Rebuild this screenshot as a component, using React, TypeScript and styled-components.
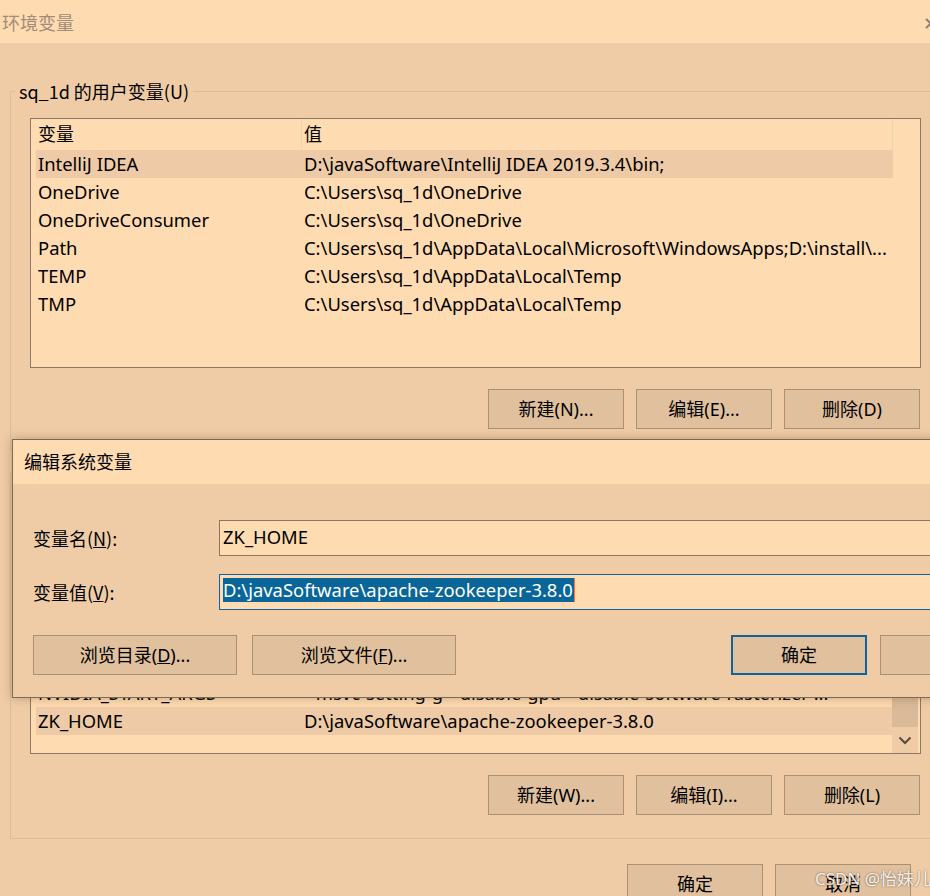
import React from 'react';
import styled, { createGlobalStyle } from 'styled-components';

// 护眼色主题下的 Windows 环境变量窗口
const C = {
  light: '#FFDBB2',
  body: '#EFCCA6',
  btn: '#E1C09E',
  btnBorder: '#AA9176',
  listBorder: '#8C7864',
  groupLine: '#DCBB98',
  selRow: '#EECBA6',
  blue: '#0B65A0',
};

const GlobalStyle = createGlobalStyle`
  body {
    margin: 0;
    background: ${C.body};
    font-family: "Noto Sans", "Noto Sans CJK SC", sans-serif;
    font-size: 18.4px;
    color: #000;
  }
`;

const Window = styled.div`
  position: relative;
  width: 930px;
  height: 896px;
  overflow: hidden;
  background: ${C.body};
`;

const TitleBar = styled.div`
  height: 43px;
  display: flex;
  align-items: center;
  justify-content: space-between;
  padding-left: 2px;
  background: ${C.light};
  color: #A08C79;
  font-family: "Noto Sans CJK SC", sans-serif;
  font-size: 18px;
  line-height: 1;
`;

const CloseGlyph = styled.span`
  margin-right: -8px;
  font-size: 18px;
  font-weight: 300;
  color: #8b7866;
`;

const Body = styled.div`
  padding: 36px 0 0 10px;
`;

const Group = styled.fieldset<{ $gap?: number; $pb?: number }>`
  box-sizing: border-box;
  width: 921px;
  margin: ${(p) => p.$gap ?? 0}px 0 0 0;
  padding: 15px 9px ${(p) => p.$pb ?? 20}px 19px;
  border: 1px solid ${C.groupLine};
  min-width: 0;
`;

const Legend = styled.legend`
  margin-left: -15px;
  padding: 0 4px;
  line-height: 24px;
  font-family: "Noto Sans CJK SC", sans-serif;
  font-size: 18px;
`;

const ListBox = styled.div<{ $h: number }>`
  box-sizing: border-box;
  height: ${(p) => p.$h}px;
  border: 1px solid ${C.listBorder};
  background: ${C.light};
  display: flex;
  position: relative;
  overflow: hidden;
`;

const ListInner = styled.div<{ $bottom?: boolean }>`
  flex: 1;
  display: flex;
  flex-direction: column;
  justify-content: ${(p) => (p.$bottom ? 'flex-end' : 'flex-start')};
  padding: ${(p) => (p.$bottom ? '0 0 18px 5px' : '0 0 0 5px')};
  overflow: hidden;
`;

const Row = styled.div<{ $sel?: boolean }>`
  flex-shrink: 0;
  display: grid;
  grid-template-columns: 266px 1fr;
  width: 857px;
  height: 28px;
  align-items: center;
  padding-left: 2px;
  box-sizing: border-box;
  background: ${(p) => (p.$sel ? C.selRow : 'transparent')};
  white-space: nowrap;
  line-height: 28px;
`;

const HeaderRow = styled(Row)`
  height: 31px;
  line-height: 31px;
  padding-left: 0;
`;

const HeadCell = styled.div`
  height: 100%;
  padding-left: 2px;
  border-right: 1px solid #F0D2B0;
  font-size: 18px;
`;

const Cell = styled.div`
  overflow: hidden;
`;

const ScrollBar = styled.div`
  width: 26px;
  margin-right: 2px;
  display: flex;
  flex-direction: column;
  background: ${C.body};
`;

const Thumb = styled.div`
  flex: 1;
  background: #DABA98;
`;

const ArrowBox = styled.div`
  height: 26px;
  display: flex;
  align-items: center;
  justify-content: center;
`;

const ButtonRow = styled.div<{ $mt: number; $pr?: number }>`
  display: flex;
  justify-content: flex-end;
  gap: 12px;
  margin-top: ${(p) => p.$mt}px;
  padding-right: ${(p) => p.$pr ?? 1}px;
`;

const Button = styled.button<{ $w?: number; $default?: boolean }>`
  box-sizing: border-box;
  width: ${(p) => p.$w ?? 136}px;
  height: 40px;
  padding: 0;
  background: ${C.btn};
  border: ${(p) => (p.$default ? `2px solid ${C.blue}` : `1px solid ${C.btnBorder}`)};
  font-family: "Noto Sans", "Noto Sans CJK SC", sans-serif;
  font-size: 18px;
  color: #000;
  line-height: 1;
`;

const Dialog = styled.div`
  position: absolute;
  left: 12px;
  top: 439px;
  width: 1022px;
  border: 1px solid #7C6A58;
  background: ${C.body};
  box-shadow: 0 0 10px rgba(90, 60, 30, 0.35);
`;

const DialogTitle = styled.div`
  height: 44px;
  display: flex;
  align-items: center;
  padding: 0 0 2px 11px;
  box-sizing: border-box;
  background: ${C.light};
  font-family: "Noto Sans CJK SC", sans-serif;
  font-size: 18px;
`;

const DialogBody = styled.div`
  padding: 36px 19px 22px 20px;
  display: flex;
  flex-direction: column;
`;

const FieldRow = styled.div<{ $mt?: number }>`
  display: grid;
  grid-template-columns: 186px 1fr;
  align-items: center;
  margin-top: ${(p) => p.$mt ?? 0}px;
`;

const Label = styled.label`
  font-family: "Noto Sans CJK SC", sans-serif;
  font-size: 18px;
`;

const Input = styled.div<{ $focus?: boolean }>`
  box-sizing: border-box;
  height: 36px;
  display: flex;
  align-items: center;
  padding: 0 0 4px 3px;
  background: ${C.light};
  border: 1px solid ${(p) => (p.$focus ? C.blue : '#8A7662')};
  white-space: nowrap;
`;

const Selected = styled.span`
  background: #0A6699;
  color: #fff;
  line-height: 24px;
  padding-right: 1px;
  border-right: 1px solid #FF7A1A;
`;

const DialogButtons = styled.div`
  display: flex;
  justify-content: space-between;
  margin-top: 25px;
`;

const BtnGroup = styled.div<{ $gap: number }>`
  display: flex;
  gap: ${(p) => p.$gap}px;
`;

const Watermark = styled.div`
  position: absolute;
  left: 815px;
  top: 865px;
  color: rgba(255, 255, 255, 0.9);
  text-shadow: 0 0 2px rgba(70, 55, 40, 0.8);
  font-size: 17px;
  font-family: "Noto Sans", "Noto Sans CJK SC", sans-serif;
  white-space: nowrap;
`;

const userVars = [
  ['IntelliJ IDEA', 'D:\\javaSoftware\\IntelliJ IDEA 2019.3.4\\bin;'],
  ['OneDrive', 'C:\\Users\\sq_1d\\OneDrive'],
  ['OneDriveConsumer', 'C:\\Users\\sq_1d\\OneDrive'],
  ['Path', 'C:\\Users\\sq_1d\\AppData\\Local\\Microsoft\\WindowsApps;D:\\install\\...'],
  ['TEMP', 'C:\\Users\\sq_1d\\AppData\\Local\\Temp'],
  ['TMP', 'C:\\Users\\sq_1d\\AppData\\Local\\Temp'],
];

const sysVars = [
  ['windir', '%SystemRoot%'],
  ['USERNAME', 'SYSTEM'],
  ['TMP', 'C:\\Windows\\TEMP'],
  ['NVIDIA_START_ARGS', '--msvc-setting-g --disable-gpu --disable-software-rasterizer ...'],
  ['ZK_HOME', 'D:\\javaSoftware\\apache-zookeeper-3.8.0'],
];

export default function App() {
  return (
    <Window>
      <GlobalStyle />
      <TitleBar>
        <span>环境变量</span>
        <CloseGlyph>✕</CloseGlyph>
      </TitleBar>
      <Body>
        <Group>
          <Legend>sq_1d 的用户变量(U)</Legend>
          <ListBox $h={250}>
            <ListInner>
              <HeaderRow>
                <HeadCell>变量</HeadCell>
                <HeadCell>值</HeadCell>
              </HeaderRow>
              {userVars.map(([k, v], i) => (
                <Row key={k + i} $sel={i === 0}>
                  <Cell>{k}</Cell>
                  <Cell>{v}</Cell>
                </Row>
              ))}
            </ListInner>
          </ListBox>
          <ButtonRow $mt={21}>
            <Button>新建(N)...</Button>
            <Button>编辑(E)...</Button>
            <Button>删除(D)</Button>
          </ButtonRow>
        </Group>
        <Group $gap={10} $pb={23}>
          <Legend>系统变量(S)</Legend>
          <ListBox $h={255}>
            <ListInner $bottom>
              {sysVars.map(([k, v], i) => (
                <Row key={k + i} $sel={k === 'ZK_HOME'}>
                  <Cell>{k}</Cell>
                  <Cell>{v}</Cell>
                </Row>
              ))}
            </ListInner>
            <ScrollBar>
              <Thumb />
              <ArrowBox>
                <svg width="14" height="9" viewBox="0 0 14 9">
                  <path d="M1.5 1.5 L7 7 L12.5 1.5" fill="none" stroke="#5A4A3C" strokeWidth="2" />
                </svg>
              </ArrowBox>
            </ScrollBar>
          </ListBox>
          <ButtonRow $mt={21}>
            <Button>新建(W)...</Button>
            <Button>编辑(I)...</Button>
            <Button>删除(L)</Button>
          </ButtonRow>
        </Group>
        <ButtonRow $mt={25} $pr={19}>
          <Button>确定</Button>
          <Button>取消</Button>
        </ButtonRow>
      </Body>

      <Dialog>
        <DialogTitle>编辑系统变量</DialogTitle>
        <DialogBody>
          <FieldRow>
            <Label>
              变量名(<u>N</u>):
            </Label>
            <Input>ZK_HOME</Input>
          </FieldRow>
          <FieldRow $mt={18}>
            <Label>
              变量值(<u>V</u>):
            </Label>
            <Input $focus>
              <Selected>D:\javaSoftware\apache-zookeeper-3.8.0</Selected>
            </Input>
          </FieldRow>
          <DialogButtons>
            <BtnGroup $gap={15}>
              <Button $w={204}>
                浏览目录(<u>D</u>)...
              </Button>
              <Button $w={204}>
                浏览文件(<u>F</u>)...
              </Button>
            </BtnGroup>
            <BtnGroup $gap={13}>
              <Button $default>确定</Button>
              <Button>取消</Button>
            </BtnGroup>
          </DialogButtons>
        </DialogBody>
      </Dialog>

      <Watermark>CSDN @怡妹儿</Watermark>
    </Window>
  );
}
